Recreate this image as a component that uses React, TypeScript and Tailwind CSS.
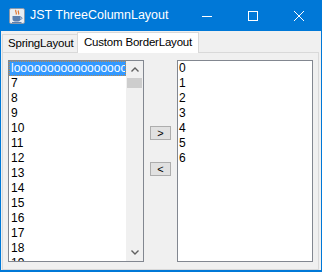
import React from "react";

const font = { fontFamily: '"Liberation Sans", Arial, sans-serif' };

const leftItems = [
  "looooooooooooooooooooooooooooo",
  "7",
  "8",
  "9",
  "10",
  "11",
  "12",
  "13",
  "14",
  "15",
  "16",
  "17",
  "18",
  "19",
];

const rightItems = ["0", "1", "2", "3", "4", "5", "6"];

function JavaIcon() {
  return (
    <svg width="16" height="16" viewBox="0 0 16 16">
      <rect x="0.5" y="0.5" width="15" height="15" rx="1.5" fill="#e9edf2" stroke="#8b99ab" />
      <path d="M7 2 C5.5 3.5 8.5 4.5 7 6.5 M9.5 2.5 C8.5 4 10.5 4.8 9.5 6.5" stroke="#e2742c" strokeWidth="1.2" fill="none" />
      <path d="M3.5 8 L3.5 11 C3.5 13 5 13.5 7.5 13.5 C10 13.5 11.5 13 11.5 11 L11.5 8 Z" fill="#5a7fb0" />
      <path d="M11.5 9 C13.5 9 13.5 11.5 11.3 11.5" stroke="#5a7fb0" strokeWidth="1" fill="none" />
      <path d="M3 14.5 L12.5 14.5" stroke="#5a7fb0" strokeWidth="1" />
    </svg>
  );
}

function TitleBar() {
  return (
    <div className="flex h-[31px] items-center text-white">
      <div className="ml-[9px] flex items-center">
        <JavaIcon />
      </div>
      <span className="ml-[5px] whitespace-nowrap text-[12.5px]" style={font}>
        JST ThreeColumnLayout
      </span>
      <div className="ml-auto flex h-full">
        <div className="flex h-full w-[46px] items-center justify-center">
          <svg width="10" height="10" viewBox="0 0 10 10">
            <path d="M0 5.5 H10" stroke="white" strokeWidth="1" />
          </svg>
        </div>
        <div className="flex h-full w-[46px] items-center justify-center">
          <svg width="10" height="10" viewBox="0 0 10 10">
            <rect x="0.5" y="0.5" width="9" height="9" stroke="white" strokeWidth="1" fill="none" />
          </svg>
        </div>
        <div className="flex h-full w-[46px] items-center justify-center">
          <svg width="10" height="10" viewBox="0 0 10 10">
            <path d="M0 0 L10 10 M10 0 L0 10" stroke="white" strokeWidth="1" />
          </svg>
        </div>
      </div>
    </div>
  );
}

function Chevron({ up }: { up?: boolean }) {
  return (
    <svg width="8" height="5" viewBox="0 0 8 5">
      <path
        d={up ? "M0.5 4.5 L4 1 L7.5 4.5" : "M0.5 0.5 L4 4 L7.5 0.5"}
        stroke="#606060"
        strokeWidth="1.4"
        fill="none"
      />
    </svg>
  );
}

function LeftList() {
  return (
    <div className="flex h-[202px] w-[136px] border border-[#828790] bg-white">
      <div className="flex min-w-0 flex-1 flex-col overflow-hidden">
        {leftItems.map((item, i) =>
          i === 0 ? (
            <div
              key={i}
              className="h-[15px] shrink-0 overflow-hidden whitespace-nowrap border border-dotted border-[#b98a4e] bg-[#3399ff] pl-px text-[12px] leading-[13px] text-white"
            >
              {item}
            </div>
          ) : (
            <div key={i} className="h-[15px] shrink-0 whitespace-nowrap pl-[2px] text-[12px] leading-[15px] text-black">
              {item}
            </div>
          ),
        )}
      </div>
      <div className="flex w-[17px] shrink-0 flex-col bg-[#f0f0f0]">
        <div className="flex h-[17px] items-center justify-center">
          <Chevron up />
        </div>
        <div className="mx-px h-[10px] bg-[#cdcdcd]" />
        <div className="flex-1" />
        <div className="flex h-[17px] items-center justify-center">
          <Chevron />
        </div>
      </div>
    </div>
  );
}

function RightList() {
  return (
    <div className="flex h-[202px] w-[136px] flex-col overflow-hidden border border-[#828790] bg-white">
      {rightItems.map((item) => (
        <div key={item} className="h-[15px] shrink-0 pl-[1px] text-[12px] leading-[15px] text-black">
          {item}
        </div>
      ))}
    </div>
  );
}

function ArrowButton({ label }: { label: string }) {
  return (
    <button
      type="button"
      className="flex h-[14px] w-[21px] items-center justify-center border border-[#adadad] bg-[#e1e1e1] text-[11px] leading-none text-black"
      style={font}
    >
      {label}
    </button>
  );
}

export default function App() {
  return (
    <div className="flex h-[272px] w-[322px] flex-col overflow-hidden bg-[#0078d7]" style={font}>
      <TitleBar />
      <div className="mx-px mb-[2px] flex flex-1 flex-col bg-[#f0f0f0] pl-px pr-[2px] pt-px">
        <div className="flex h-[20px] items-end whitespace-nowrap text-[11.5px] tracking-[-0.2px] text-black">
          <div className="flex h-[18px] w-[75px] shrink-0 items-center border-l border-t border-[#d9d9d9] pl-[5px]">
            SpringLayout
          </div>
          <div className="relative z-10 -mb-px flex h-[21px] w-[122px] shrink-0 items-center border-x border-t border-[#d9d9d9] bg-white pl-[6px]">
            Custom BorderLayout
          </div>
        </div>
        <div className="flex flex-1 border border-[#d9d9d9] px-[5px] pb-[6px] pt-[7px]">
          <LeftList />
          <div className="flex w-[33px] flex-col items-center gap-[22px] pt-[66px]">
            <ArrowButton label=">" />
            <ArrowButton label="<" />
          </div>
          <RightList />
        </div>
      </div>
    </div>
  );
}
